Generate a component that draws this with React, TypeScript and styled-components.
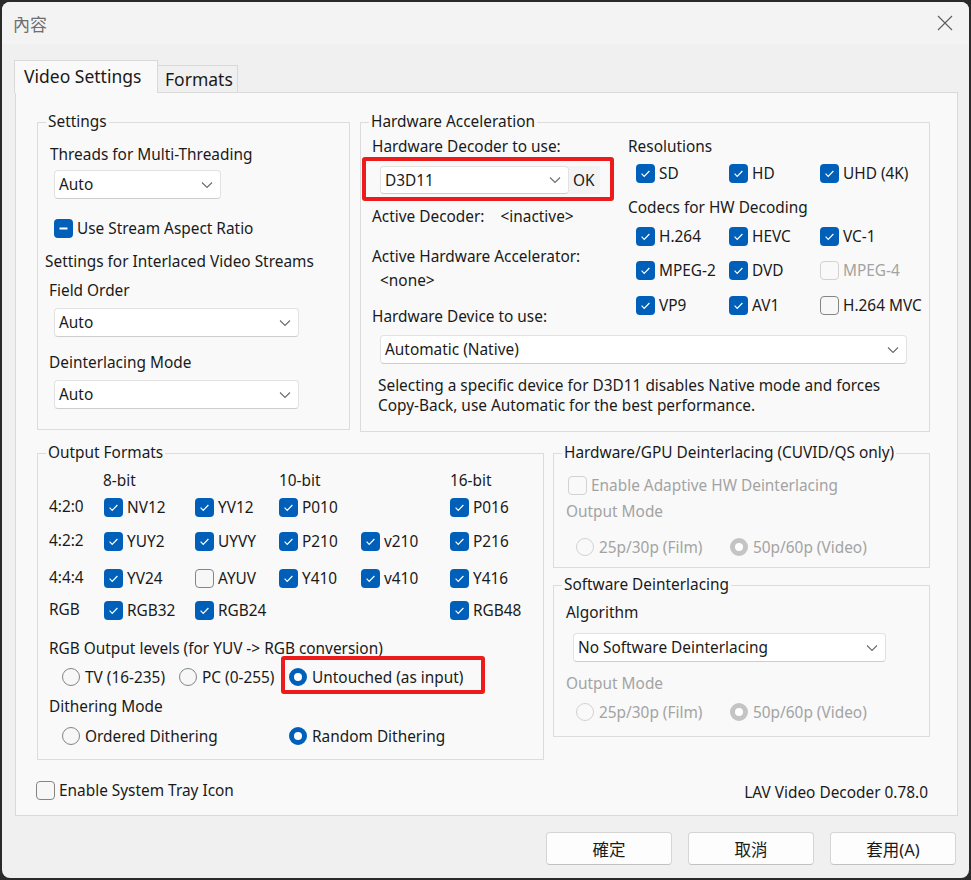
import React from "react";
import styled, { createGlobalStyle, css } from "styled-components";

const FONT = `"Noto Sans", "Noto Sans CJK TC", sans-serif`;
const SIZE = "15.4px";
const ACCENT = "#005fb8";

const GlobalStyle = createGlobalStyle`
  html, body { margin: 0; padding: 0; background: #2a2a2a; }
  body { font-family: ${FONT}; font-size: ${SIZE}; color: #1a1a1a; }
  * { box-sizing: border-box; }
`;

const Window = styled.div`
  width: 967px;
  height: 876px;
  margin: 2px;
  border-radius: 8px;
  background: #f0f0f0;
  display: flex;
  flex-direction: column;
  overflow: hidden;
`;

const TitleBar = styled.div`
  height: 42px;
  display: flex;
  align-items: center;
  justify-content: space-between;
  padding: 0 15px 0 11px;
  background: #f3f3f3;
`;

const Title = styled.span`
  font-size: 17px;
  color: #6e6e6e;
`;

const Body = styled.div`
  padding: 16px 12px 12px;
  display: flex;
  flex-direction: column;
`;

const Tabs = styled.div`
  display: flex;
  align-items: flex-end;
  height: 33px;
  margin-bottom: -1px;
  position: relative;
  z-index: 1;
`;

const Tab = styled.div<{ $active?: boolean; $w: number }>`
  width: ${(p) => p.$w}px;
  height: ${(p) => (p.$active ? 33 : 28)}px;
  border: 1px solid #d9d9d9;
  border-bottom: none;
  display: flex;
  align-items: center;
  font-size: 17.5px;
  ${(p) =>
    p.$active
      ? css`
          background: #f9f9f9;
          padding-left: 9px;
          padding-bottom: 3px;
        `
      : css`
          background: #f0f0f0;
          border-left: none;
          padding-left: 7px;
          border-bottom: 1px solid #d9d9d9;
        `}
`;

const Page = styled.div`
  width: 943px;
  height: 724px;
  margin-left: 1px;
  border: 1px solid #d9d9d9;
  background: #f9f9f9;
  padding: 19px 27px 0 21px;
  display: flex;
  flex-direction: column;
`;

const Row = styled.div<{ $gap: number; $mt?: number }>`
  display: flex;
  gap: ${(p) => p.$gap}px;
  margin-top: ${(p) => p.$mt ?? 0}px;
`;

const Column = styled.div<{ $w: number; $gap?: number }>`
  width: ${(p) => p.$w}px;
  display: flex;
  flex-direction: column;
  gap: ${(p) => p.$gap ?? 0}px;
`;

const Group = styled.fieldset<{ $w: number; $h: number; $pl: number }>`
  margin: 0;
  padding: 0 0 0 ${(p) => p.$pl}px;
  min-width: 0;
  width: ${(p) => p.$w}px;
  height: ${(p) => p.$h}px;
  border: 1px solid #dcdcdc;
  display: flex;
  flex-direction: column;
  align-items: flex-start;
`;

// the legend sits 8px in from the border, whatever the group's padding
const Legend = styled.legend<{ $pl: number }>`
  margin-left: ${(p) => 8 - p.$pl}px;
  padding: 0 2px;
  line-height: 20px;
  font-size: ${SIZE};
`;

const Label = styled.div<{ $mt?: number; $ml?: number; $muted?: boolean }>`
  line-height: 20px;
  font-size: ${SIZE};
  margin-top: ${(p) => p.$mt ?? 0}px;
  margin-left: ${(p) => p.$ml ?? 0}px;
  color: ${(p) => (p.$muted ? "#a3a3a3" : "#1a1a1a")};
  white-space: nowrap;
`;

const Note = styled(Label)`
  white-space: normal;
`;

const SelectBox = styled.div<{ $w: number; $mt?: number; $ml?: number; $h?: number }>`
  width: ${(p) => p.$w}px;
  height: ${(p) => p.$h ?? 29}px;
  margin-top: ${(p) => p.$mt ?? 0}px;
  margin-left: ${(p) => p.$ml ?? 0}px;
  flex-shrink: 0;
  background: #ffffff;
  border: 1px solid #e2e2e2;
  border-bottom-color: #cdcdcd;
  border-radius: 4px;
  display: flex;
  align-items: center;
  justify-content: space-between;
  padding: 0 7px 0 4px;
  font-size: ${SIZE};
`;

const Chevron = () => (
  <svg width="12" height="8" viewBox="0 0 12 8">
    <path d="M1 1.5l5 5 5-5" fill="none" stroke="#6a6a6a" strokeWidth="1.1" />
  </svg>
);

const Select = ({ value, w, mt, ml, h }: { value: string; w: number; mt?: number; ml?: number; h?: number }) => (
  <SelectBox $w={w} $mt={mt} $ml={ml} $h={h}>
    <span>{value}</span>
    <Chevron />
  </SelectBox>
);

const Box = styled.span<{ $on?: boolean; $off?: boolean }>`
  width: 19px;
  height: 19px;
  border-radius: 4px;
  flex-shrink: 0;
  display: flex;
  align-items: center;
  justify-content: center;
  ${(p) =>
    p.$on
      ? css`
          background: ${ACCENT};
        `
      : p.$off
      ? css`
          border: 1px solid #d2d2d2;
          background: #f9f9f9;
        `
      : css`
          border: 1px solid #858585;
          background: #f7f7f7;
        `}
`;

const Item = styled.div<{ $w?: number; $ml?: number; $mt?: number; $muted?: boolean }>`
  display: flex;
  align-items: center;
  gap: 4px;
  height: 20px;
  font-size: ${SIZE};
  white-space: nowrap;
  width: ${(p) => (p.$w ? `${p.$w}px` : "auto")};
  margin-left: ${(p) => p.$ml ?? 0}px;
  margin-top: ${(p) => p.$mt ?? 0}px;
  color: ${(p) => (p.$muted ? "#a3a3a3" : "#1a1a1a")};
`;

type CheckProps = {
  label: string;
  on?: boolean;
  mixed?: boolean;
  off?: boolean;
  w?: number;
  ml?: number;
  mt?: number;
};

const Check = ({ label, on, mixed, off, w, ml, mt }: CheckProps) => (
  <Item $w={w} $ml={ml} $mt={mt} $muted={off}>
    <Box $on={on || mixed} $off={off}>
      {on && (
        <svg width="19" height="19" viewBox="0 0 19 19">
          <path d="M5.6 9.7l2.6 2.6 5.2-5.3" fill="none" stroke="#fff" strokeWidth="1.2" />
        </svg>
      )}
      {mixed && (
        <svg width="19" height="19" viewBox="0 0 19 19">
          <path d="M5.5 9.5h8" stroke="#fff" strokeWidth="1.8" />
        </svg>
      )}
    </Box>
    {label}
  </Item>
);

const Dot = styled.span<{ $on?: boolean; $off?: boolean }>`
  width: 18px;
  height: 18px;
  border-radius: 50%;
  flex-shrink: 0;
  ${(p) =>
    p.$on
      ? css`
          background: ${p.$off ? "#c4c4c4" : ACCENT};
          border: 5px solid ${p.$off ? "#c4c4c4" : ACCENT};
          &::after {
            content: "";
            display: block;
            width: 8px;
            height: 8px;
            border-radius: 50%;
            background: #fff;
          }
        `
      : css`
          border: 1px solid ${p.$off ? "#d2d2d2" : "#858585"};
          background: ${p.$off ? "#f9f9f9" : "#f7f7f7"};
        `}
`;

const RadioItem = styled(Item)`
  gap: 5px;
`;

const Radio = ({ label, on, off, w }: { label: string; on?: boolean; off?: boolean; w?: number }) => (
  <RadioItem $w={w} $muted={off}>
    <Dot $on={on} $off={off} />
    {label}
  </RadioItem>
);

const RadioRow = styled.div<{ $mt: number; $ml: number }>`
  display: flex;
  align-items: center;
  margin-top: ${(p) => p.$mt}px;
  margin-left: ${(p) => p.$ml}px;
`;

const Highlight = styled.div`
  border: 4px solid #ec1c1c;
  border-radius: 3px;
  padding: 7px 18px 3px 4px;
  margin: -11px -22px -7px -8px;
`;

const DecoderBox = styled.div`
  margin-left: -10px;
  width: 252px;
  height: 44px;
  border: 4px solid #ec1c1c;
  border-radius: 3px;
  padding: 5px 0 0 14px;
  display: flex;
`;

const OkButton = styled.span`
  width: 31px;
  height: 28px;
  display: flex;
  align-items: center;
  padding-left: 4px;
  font-size: ${SIZE};
  background: #f3f3f3;
`;

const CheckGrid = styled.div<{ $cols: string; $mt: number; $ml: number; $rowGap?: number }>`
  display: grid;
  grid-template-columns: ${(p) => p.$cols};
  grid-auto-rows: 20px;
  row-gap: ${(p) => p.$rowGap ?? 0}px;
  margin-top: ${(p) => p.$mt}px;
  margin-left: ${(p) => p.$ml}px;
  align-items: center;
`;

const FormatGrid = styled.div`
  display: grid;
  grid-template-columns: 55px 91px 84px 82px 89px 1fr;
  grid-template-rows: 20px 32px 36px 38px 26px;
  margin-top: 8px;
  align-items: center;
  font-size: ${SIZE};
`;

const Cell = styled.span<{ $ml?: number }>`
  line-height: 20px;
  margin-left: ${(p) => p.$ml ?? 0}px;
`;

const Footer = styled.div`
  display: flex;
  justify-content: space-between;
  align-items: flex-start;
  margin-top: 20px;
`;

const Version = styled.span`
  font-size: ${SIZE};
  line-height: 20px;
  margin-top: 3px;
  margin-right: 2px;
`;

const ButtonBar = styled.div`
  display: flex;
  justify-content: flex-end;
  gap: 16px;
  margin-top: 16px;
  padding-right: 1px;
`;

const DialogButton = styled.button`
  width: 126px;
  height: 33px;
  border: 1px solid #d5d5d5;
  border-bottom-color: #c2c2c2;
  border-radius: 4px;
  background: #fdfdfd;
  font-family: ${FONT};
  font-size: 16.5px;
  color: #1a1a1a;
  padding: 0;
`;

const CloseIcon = () => (
  <svg width="18" height="18" viewBox="0 0 18 18">
    <path d="M2 2l14 14M16 2L2 16" stroke="#5c5c5c" strokeWidth="1.1" />
  </svg>
);

const Inline = styled.div<{ $mt: number; $gap: number }>`
  display: flex;
  gap: ${(p) => p.$gap}px;
  margin-top: ${(p) => p.$mt}px;
  font-size: ${SIZE};
  line-height: 20px;
`;

const SettingsGroup = () => (
  <Group $w={313} $h={318} $pl={12}>
    <Legend $pl={12}>Settings</Legend>
    <Label $mt={13}>Threads for Multi-Threading</Label>
    <Select value="Auto" w={167} mt={5} ml={4} />
    <Check label="Use Stream Aspect Ratio" mixed ml={4} mt={19} />
    <Label $mt={14} $ml={-5}>
      Settings for Interlaced Video Streams
    </Label>
    <Label $mt={9} $ml={-1}>
      Field Order
    </Label>
    <Select value="Auto" w={245} mt={7} ml={4} />
    <Label $mt={16} $ml={-1}>
      Deinterlacing Mode
    </Label>
    <Select value="Auto" w={245} mt={7} ml={4} />
  </Group>
);

const HardwareGroup = () => (
  <Group $w={570} $h={320} $pl={11}>
    <Legend $pl={11}>Hardware Acceleration</Legend>
    <Row $gap={0}>
      <Column $w={256}>
        <Label $mt={5}>Hardware Decoder to use:</Label>
        <DecoderBox>
          <Select value="D3D11" w={189} h={28} />
          <OkButton>OK</OkButton>
        </DecoderBox>
        <Inline $mt={6} $gap={16}>
          <span>Active Decoder:</span>
          <span>&lt;inactive&gt;</span>
        </Inline>
        <Label $mt={20}>Active Hardware Accelerator:</Label>
        <Label $mt={4} $ml={8}>
          &lt;none&gt;
        </Label>
        <Label $mt={16}>Hardware Device to use:</Label>
      </Column>
      <Column $w={290}>
        <Label $mt={5}>Resolutions</Label>
        <CheckGrid $cols="93px 91px auto" $mt={6} $ml={8}>
          <Check label="SD" on />
          <Check label="HD" on />
          <Check label="UHD (4K)" on />
        </CheckGrid>
        <Label $mt={15}>Codecs for HW Decoding</Label>
        <CheckGrid $cols="93px 91px auto" $mt={8} $ml={8} $rowGap={14.5}>
          <Check label="H.264" on />
          <Check label="HEVC" on />
          <Check label="VC-1" on />
          <Check label="MPEG-2" on />
          <Check label="DVD" on />
          <Check label="MPEG-4" off />
          <Check label="VP9" on />
          <Check label="AV1" on />
          <Check label="H.264 MVC" />
        </CheckGrid>
      </Column>
    </Row>
    <Select value="Automatic (Native)" w={527} mt={8} ml={8} />
    <Note $mt={12} $ml={6}>
      Selecting a specific device for D3D11 disables Native mode and forces
      <br />
      Copy-Back, use Automatic for the best performance.
    </Note>
  </Group>
);

const OutputGroup = () => (
  <Group $w={507} $h={317} $pl={11}>
    <Legend $pl={11}>Output Formats</Legend>
    <FormatGrid>
      <span />
      <Cell $ml={-1}>8-bit</Cell>
      <span />
      <Cell>10-bit</Cell>
      <span />
      <Cell>16-bit</Cell>

      <Cell>4:2:0</Cell>
      <Check label="NV12" on />
      <Check label="YV12" on />
      <Check label="P010" on />
      <span />
      <Check label="P016" on />

      <Cell>4:2:2</Cell>
      <Check label="YUY2" on />
      <Check label="UYVY" on />
      <Check label="P210" on />
      <Check label="v210" on />
      <Check label="P216" on />

      <Cell>4:4:4</Cell>
      <Check label="YV24" on />
      <Check label="AYUV" />
      <Check label="Y410" on />
      <Check label="v410" on />
      <Check label="Y416" on />

      <Cell>RGB</Cell>
      <Check label="RGB32" on />
      <Check label="RGB24" on />
      <span />
      <span />
      <Check label="RGB48" on />
    </FormatGrid>
    <Label $mt={16}>RGB Output levels (for YUV -&gt; RGB conversion)</Label>
    <RadioRow $mt={8} $ml={13}>
      <Radio label="TV (16-235)" w={117} />
      <Radio label="PC (0-255)" w={110} />
      <Highlight>
        <Radio label="Untouched (as input)" on />
      </Highlight>
    </RadioRow>
    <Label $mt={10}>Dithering Mode</Label>
    <RadioRow $mt={9} $ml={13}>
      <Radio label="Ordered Dithering" w={227} />
      <Radio label="Random Dithering" on />
    </RadioRow>
  </Group>
);

const HwDeintGroup = () => (
  <Group $w={377} $h={125} $pl={14}>
    <Legend $pl={14}>Hardware/GPU Deinterlacing (CUVID/QS only)</Legend>
    <Check label="Enable Adaptive HW Deinterlacing" off mt={12} />
    <Label $mt={7} $ml={-2} $muted>
      Output Mode
    </Label>
    <RadioRow $mt={15} $ml={8}>
      <Radio label="25p/30p (Film)" off w={154} />
      <Radio label="50p/60p (Video)" off on />
    </RadioRow>
  </Group>
);

const SwDeintGroup = () => (
  <Group $w={377} $h={162} $pl={14}>
    <Legend $pl={14}>Software Deinterlacing</Legend>
    <Label $mt={8} $ml={-2}>
      Algorithm
    </Label>
    <Select value="No Software Deinterlacing" w={313} mt={10} ml={5} />
    <Label $mt={12} $ml={-2} $muted>
      Output Mode
    </Label>
    <RadioRow $mt={8} $ml={8}>
      <Radio label="25p/30p (Film)" off w={154} />
      <Radio label="50p/60p (Video)" off on />
    </RadioRow>
  </Group>
);

export default function App() {
  return (
    <>
      <GlobalStyle />
      <Window>
        <TitleBar>
          <Title>內容</Title>
          <CloseIcon />
        </TitleBar>
        <Body>
          <Tabs>
            <Tab $active $w={144}>
              Video Settings
            </Tab>
            <Tab $w={80}>Formats</Tab>
          </Tabs>
          <Page>
            <Row $gap={10}>
              <SettingsGroup />
              <HardwareGroup />
            </Row>
            <Row $gap={9} $mt={11}>
              <OutputGroup />
              <Column $w={377} $gap={7}>
                <HwDeintGroup />
                <SwDeintGroup />
              </Column>
            </Row>
            <Footer>
              <Check label="Enable System Tray Icon" ml={-1} />
              <Version>LAV Video Decoder 0.78.0</Version>
            </Footer>
          </Page>
          <ButtonBar>
            <DialogButton>確定</DialogButton>
            <DialogButton>取消</DialogButton>
            <DialogButton>套用(A)</DialogButton>
          </ButtonBar>
        </Body>
      </Window>
    </>
  );
}
